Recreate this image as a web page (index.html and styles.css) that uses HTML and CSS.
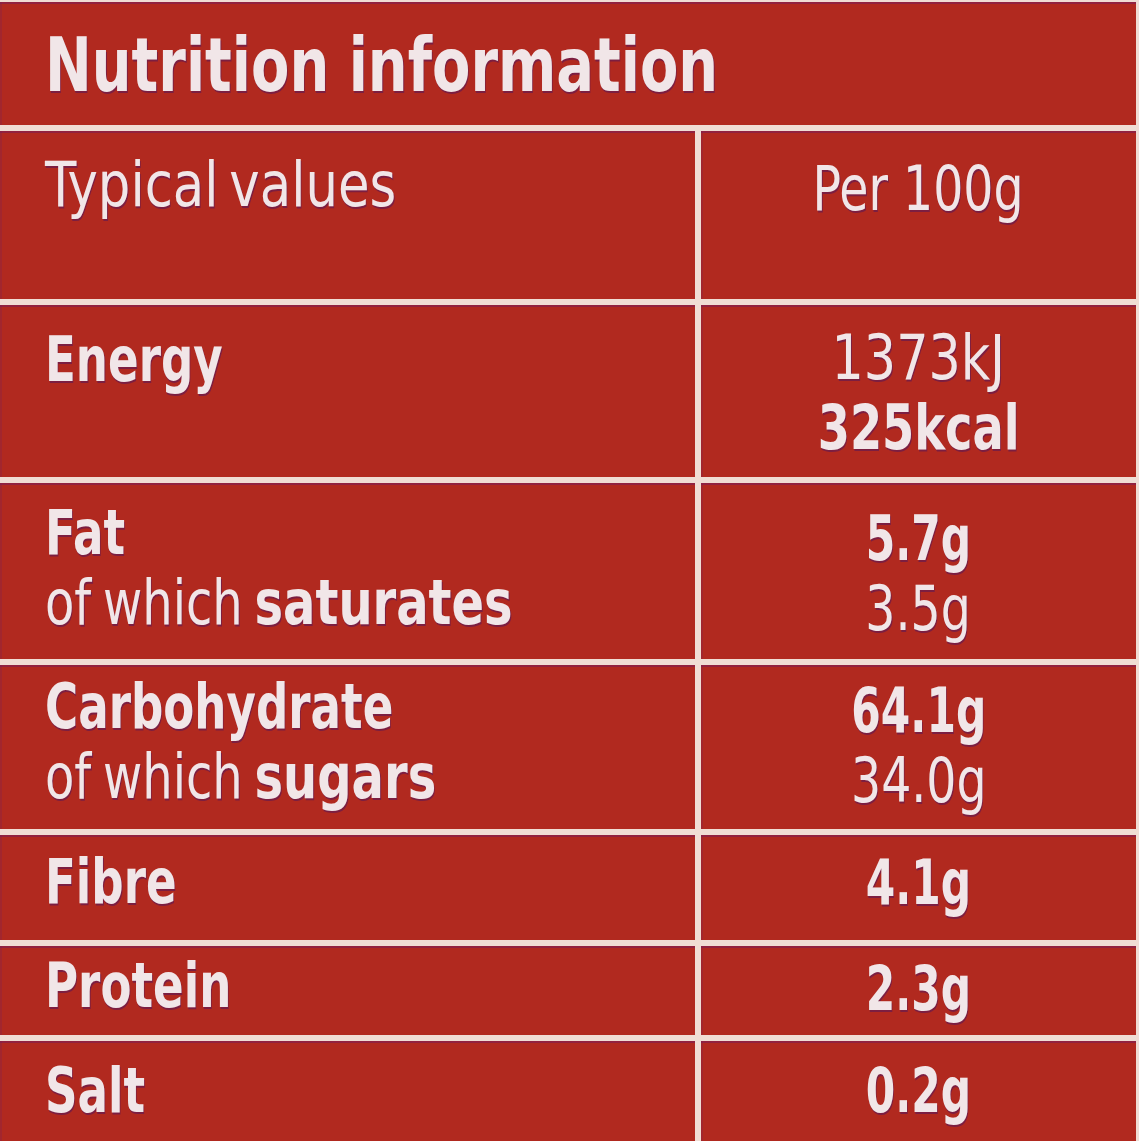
FILE: index.html
```html
<!DOCTYPE html>
<html lang="en">
<head>
<meta charset="utf-8">
<title>Nutrition information</title>
<link rel="stylesheet" href="styles.css">
</head>
<body>
<div class="label">
  <div class="cell title-cell"><h1 class="title">Nutrition information</h1></div>

  <div class="cell name row-head"><span class="line c-head reg">Typical values</span></div>
  <div class="cell value row-head head-val"><span class="line c-vr reg">Per 100g</span></div>

  <div class="cell name row-energy"><b class="line c-b">Energy</b></div>
  <div class="cell value row-energy val-energy"><span class="line c-kj reg">1373kJ</span><br><b class="line c-kcal">325kcal</b></div>

  <div class="cell name row-fat"><b class="line c-b">Fat</b><br><span class="line c-r"><span class="reg">of which</span> <b>saturates</b></span></div>
  <div class="cell value row-fat val-fat"><b class="line c-vb">5.7g</b><br><span class="line c-vr reg">3.5g</span></div>

  <div class="cell name row-carb"><b class="line c-b">Carbohydrate</b><br><span class="line c-r"><span class="reg">of which</span> <b>sugars</b></span></div>
  <div class="cell value row-carb val-carb"><b class="line c-vb">64.1g</b><br><span class="line c-vr reg">34.0g</span></div>

  <div class="cell name row-fibre"><b class="line c-b">Fibre</b></div>
  <div class="cell value row-fibre val-fibre"><b class="line c-vb">4.1g</b></div>

  <div class="cell name row-protein"><b class="line c-b">Protein</b></div>
  <div class="cell value row-protein val-protein"><b class="line c-vb">2.3g</b></div>

  <div class="cell name row-salt"><b class="line c-b">Salt</b></div>
  <div class="cell value row-salt"><b class="line c-vb">0.2g</b></div>
</div>
</body>
</html>
```
FILE: styles.css
```css
html, body {
  margin: 0;
  padding: 0;
  background: #f0ddd4;
}

body {
  width: 1139px;
  height: 1141px;
  overflow: hidden;
  font-family: "DejaVu Sans Condensed", "DejaVu Sans", "Liberation Sans", sans-serif;
  color: #f1e6e8;
}

.label {
  display: grid;
  grid-template-columns: 695px 435px;
  grid-template-rows: 123px 168px 172px 176px 164px 105px 89px 100px;
  column-gap: 6px;
  row-gap: 6px;
  padding: 2px 3px 0 0;
  background: #f0ddd4;
  height: 1141px;
  box-sizing: border-box;
}

.cell {
  background: #b1291f;
  box-shadow: inset 0 2px 0 rgba(120, 30, 90, 0.55), inset 2px 0 0 rgba(120, 30, 90, 0.25);
  font-size: 62px;
  line-height: 70px;
  text-shadow: 1px 2px 0 rgba(95, 25, 85, 0.65);
  white-space: nowrap;
  box-sizing: border-box;
}

.title-cell {
  grid-column: 1 / span 2;
  padding: 26px 0 0 45px;
}

.title {
  display: inline-block;
  margin: 0;
  font-size: 74px;
  line-height: 74px;
  font-weight: 700;
  transform: scaleX(0.84);
  transform-origin: left center;
}

.name {
  padding-left: 45px;
}

.value {
  text-align: center;
}

.line {
  display: inline-block;
  transform-origin: left center;
}

.value .line {
  transform-origin: center center;
}

.c-head { transform: scaleX(0.92); word-spacing: -6px; }
.c-b { transform: scaleX(0.81); }
.c-r { transform: scaleX(0.86); word-spacing: -4px; }
.c-vb { transform: scaleX(0.76); }
.c-vr { transform: scaleX(0.85); }
.c-kj { transform: scaleX(0.91); }
.c-kcal { transform: scaleX(0.83); }

.reg {
  font-weight: 400;
}

b {
  font-weight: 700;
}

.row-head { padding-top: 19px; }
.head-val { padding-top: 23px; }
.row-energy { padding-top: 20px; }
.val-energy { padding-top: 18px; }
.row-fat { padding-top: 15px; }
.val-fat { padding-top: 21px; }
.row-carb { padding-top: 7px; }
.val-carb { padding-top: 11px; }
.row-fibre { padding-top: 12px; }
.val-fibre { padding-top: 13px; }
.row-protein { padding-top: 5px; }
.val-protein { padding-top: 8px; }
.row-salt { padding-top: 15px; }
```
